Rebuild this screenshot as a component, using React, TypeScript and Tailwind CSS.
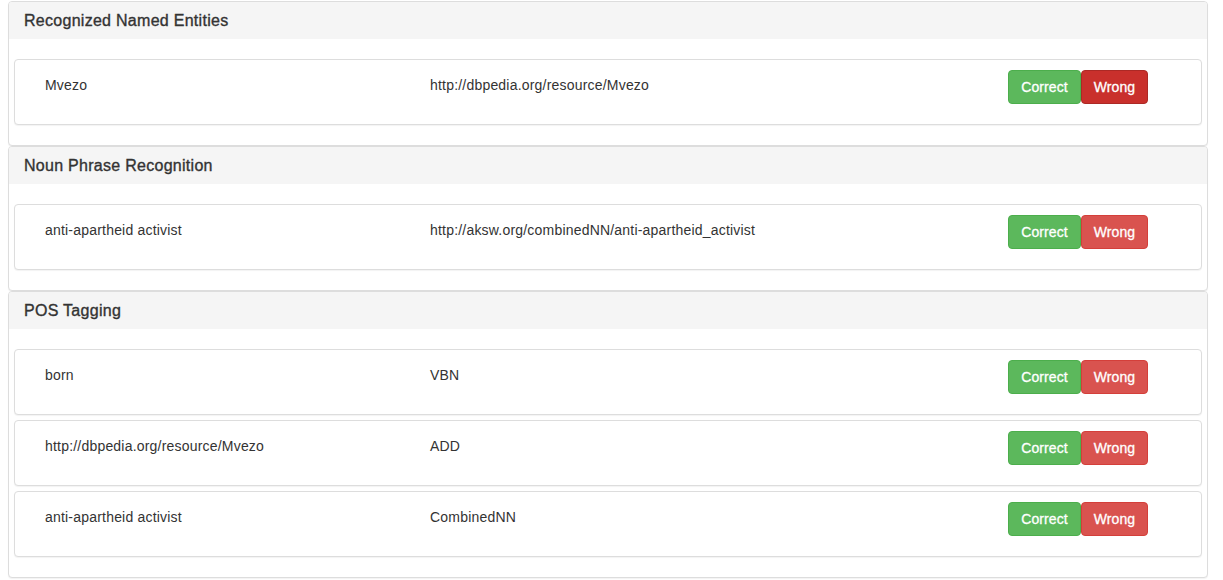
import React from "react";

type Row = { a: string; b: string; active?: boolean };

const sections: { title: string; rows: Row[] }[] = [
  {
    title: "Recognized Named Entities",
    rows: [{ a: "Mvezo", b: "http://dbpedia.org/resource/Mvezo", active: true }],
  },
  {
    title: "Noun Phrase Recognition",
    rows: [
      {
        a: "anti-apartheid activist",
        b: "http://aksw.org/combinedNN/anti-apartheid_activist",
      },
    ],
  },
  {
    title: "POS Tagging",
    rows: [
      { a: "born", b: "VBN" },
      { a: "http://dbpedia.org/resource/Mvezo", b: "ADD" },
      { a: "anti-apartheid activist", b: "CombinedNN" },
    ],
  },
];

function ItemRow({ row }: { row: Row }) {
  return (
    <div className="flex items-start h-[66px] border border-[#dddddd] rounded-[4px] bg-white pl-[30px] shadow-[0_1px_1px_rgba(0,0,0,0.05)]">
      <div className="w-[385px] pt-[15px] leading-[20px] text-[14px] tracking-[0.2px] text-[#333333]">{row.a}</div>
      <div className="w-[578px] pt-[15px] leading-[20px] text-[14px] tracking-[0.2px] text-[#333333]">{row.b}</div>
      <div className="flex pt-[10px]">
        <button className="h-[34px] w-[73px] border border-[#4cae4c] bg-[#5cb85c] text-white text-[14px] leading-[20px] tracking-[0.1px] rounded-[4px] [-webkit-text-stroke:0.3px_#ffffff]">
          Correct
        </button>
        <button
          className={
            row.active
              ? "h-[34px] w-[67px] border border-[#ac2925] bg-[#c9302c] text-white text-[14px] leading-[20px] tracking-[0.1px] rounded-[4px] [-webkit-text-stroke:0.3px_#ffffff]"
              : "h-[34px] w-[67px] border border-[#d43f3a] bg-[#d9534f] text-white text-[14px] leading-[20px] tracking-[0.1px] rounded-[4px] [-webkit-text-stroke:0.3px_#ffffff]"
          }
        >
          Wrong
        </button>
      </div>
    </div>
  );
}

export default function App() {
  return (
    <div
      className="bg-white min-h-[580px] px-[8px] pt-[1px] w-[1223px]"
      style={{ fontFamily: '"Liberation Sans", Arial, Helvetica, sans-serif' }}
    >
      <div className="w-[1200px]">
        {sections.map((s) => (
          <div
            key={s.title}
            className="border border-[#dddddd] rounded-[4px] bg-white shadow-[0_1px_1px_rgba(0,0,0,0.05)]"
          >
            <div className="h-[37px] bg-[#f5f5f5] px-[15px] py-[10px] rounded-t-[3px] text-[16px] leading-[17px] tracking-[0.28px] text-[#333333] [-webkit-text-stroke:0.35px_#333333]">
              {s.title}
            </div>
            <div className="px-[5px] py-[20px] flex flex-col gap-[5px]">
              {s.rows.map((r, i) => (
                <ItemRow key={i} row={r} />
              ))}
            </div>
          </div>
        ))}
      </div>
    </div>
  );
}
